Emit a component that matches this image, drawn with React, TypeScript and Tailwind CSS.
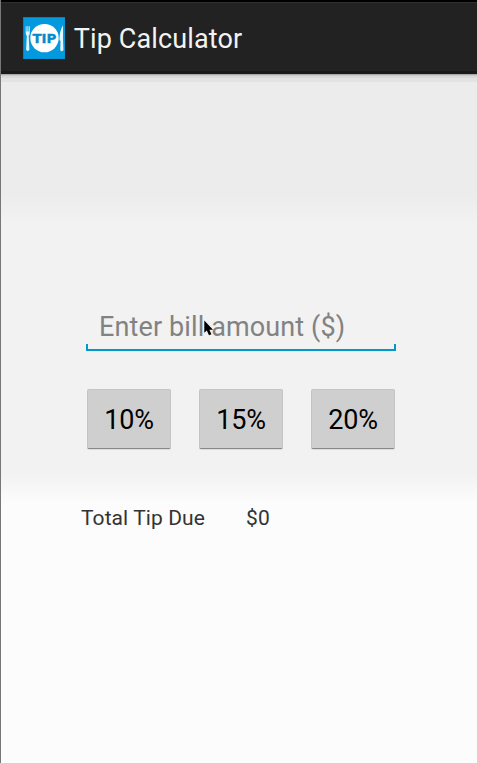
const rates = ['10%', '15%', '20%'];

function TipLogo() {
  return (
    <svg className="block h-[42.5px] w-[42.5px] shrink-0" viewBox="0 0 42.5 42.5" aria-hidden="true">
      <rect width="42.5" height="42.5" fill="#087bae" />
      <rect x="0.7" y="0.7" width="41.1" height="41.1" fill="#0399de" />
      <circle cx="21.5" cy="21.1" r="14.2" fill="#fff" />
      <path d="M2.7 9.3V16Q2.7 18 3.8 18.7L3.1 32.5Q4.8 35.5 6.4 32.5L5.7 18.7Q6.8 18 6.8 16V9.3H6.1V14.5H5.4V9.3H4.4V14.5H3.5V9.3Z" fill="#e2f6ff" />
      <path d="M40 8.3Q36.4 14 36.5 23L37.5 24L37.2 33Q38.9 35.5 40.4 33L40 22Z" fill="#e2f6ff" />
      <text x="9.4" y="25.6" textLength="24" lengthAdjust="spacingAndGlyphs" fontFamily="DejaVu Sans, sans-serif" fontWeight="bold" fontSize="12.6" fill="#0789ca" stroke="#0789ca" strokeWidth="0.3">TIP</text>
    </svg>
  );
}

export default function App() {
  return (
    <div className="relative flex h-[763px] w-[477px] flex-col overflow-hidden border-l border-[#777] bg-[linear-gradient(to_bottom,#ececec_194px,#f2f2f2_225px,#f2f2f2_474px,#fcfcfc_503px)] font-['Roboto',sans-serif]">
      <header className="flex h-[74px] shrink-0 items-start border-t-2 border-b-3 border-t-black border-b-[#191919] bg-[#222] pt-[14.6px] pl-[21.6px] shadow-[inset_0_1px_0_#303030,0_1px_0_#a9a9a9,0_2px_0_#c9c9c9,0_4px_0_#d8d8d8,0_8px_0_#e3e3e3]">
        <TipLogo />
        <h1 className="ml-[8.7px] pt-px whitespace-nowrap text-[27px] leading-[43px] tracking-[0.12px] text-[#f3f3f3]">Tip Calculator</h1>
      </header>

      <main className="flex flex-col pt-[236px]">
        <div className="ml-[85px] flex h-[41px] w-[310px] flex-col justify-end">
          <label className="h-[34px] pl-[13px] text-[27px] leading-[34px] tracking-[0.12px] text-[#828282]">Enter bill amount ($)</label>
          <div className="h-[7px] border-x-2 border-b-2 border-[#0099cc]" />
        </div>

        <div className="mt-[38px] ml-[86px] flex gap-[28px]">
          {rates.map((rate) => (
            <button
              key={rate}
              className="h-[60px] w-[84px] rounded-[2px] border border-[#c5c5c5] border-b-[#888] bg-[#cfcfcf] pt-[2px] text-[27px] leading-[57px] tracking-[-0.15px] text-black shadow-[0_1px_0_#ddd]"
            >
              {rate}
            </button>
          ))}
        </div>

        <div className="mt-[56px] ml-[80px] flex text-[21px] leading-[26px] tracking-[0.08px] text-[#333]">
          <span className="w-[165px]">Total Tip Due</span>
          <span>$0</span>
        </div>
      </main>

      <svg className="absolute top-[320px] left-[202px] h-[17px] w-[11px]" viewBox="0 0 11 17" aria-hidden="true">
        <path d="M1.3 0.5V12.8L3.8 10.6L6 15.2L8.4 14.2L6.4 9.8H10Z" fill="#000" />
      </svg>
    </div>
  );
}
